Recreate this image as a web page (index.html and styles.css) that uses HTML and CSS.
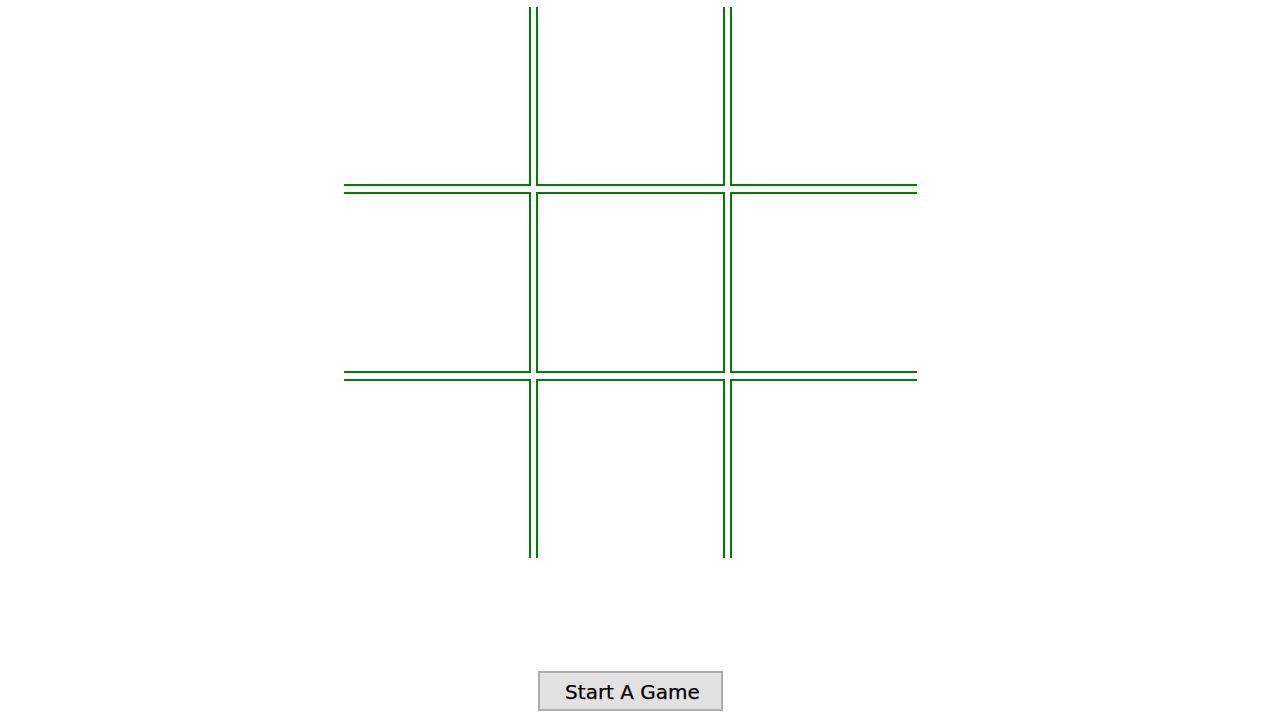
FILE: index.html
```html
<!DOCTYPE html>
<html>
<head>
<meta charset="utf-8">
<title>Tic Tac Toe</title>
<link rel="stylesheet" href="styles.css">
</head>
<body>
<div class="page">
  <div class="board">
    <div class="cell b-r b-b"></div>
    <div class="cell b-l b-r b-b"></div>
    <div class="cell b-l b-b"></div>
    <div class="cell b-t b-r b-b"></div>
    <div class="cell b-t b-l b-r b-b"></div>
    <div class="cell b-t b-l b-b"></div>
    <div class="cell b-t b-r"></div>
    <div class="cell b-t b-l b-r"></div>
    <div class="cell b-t b-l"></div>
  </div>
  <button class="start-btn" type="button">Start A Game</button>
</div>
</body>
</html>
```
FILE: styles.css
```css
html, body {
  margin: 0;
  padding: 0;
  background: #ffffff;
}

.page {
  width: 1261px;
  padding-top: 7px;
  display: flex;
  flex-direction: column;
  align-items: center;
}

.board {
  display: grid;
  grid-template-columns: 187px 189px 187px;
  grid-template-rows: 179px 181px 179px;
  column-gap: 5px;
  row-gap: 6px;
}

.cell {
  box-sizing: border-box;
  background: #ffffff;
}

.b-t { border-top: 2px solid #008000; }
.b-b { border-bottom: 2px solid #008000; }
.b-l { border-left: 2px solid #008000; }
.b-r { border-right: 2px solid #008000; }

.start-btn {
  margin-top: 113px;
  box-sizing: border-box;
  width: 185px;
  height: 40px;
  border: 2px solid #adadad;
  background: #e1e1e1;
  color: #000000;
  font-family: "DejaVu Sans", Verdana, sans-serif;
  font-size: 20px;
  -webkit-text-stroke: 0.25px #000000;
  padding: 2px 0 0 4px;
  line-height: 34px;
  border-radius: 0;
}
```
